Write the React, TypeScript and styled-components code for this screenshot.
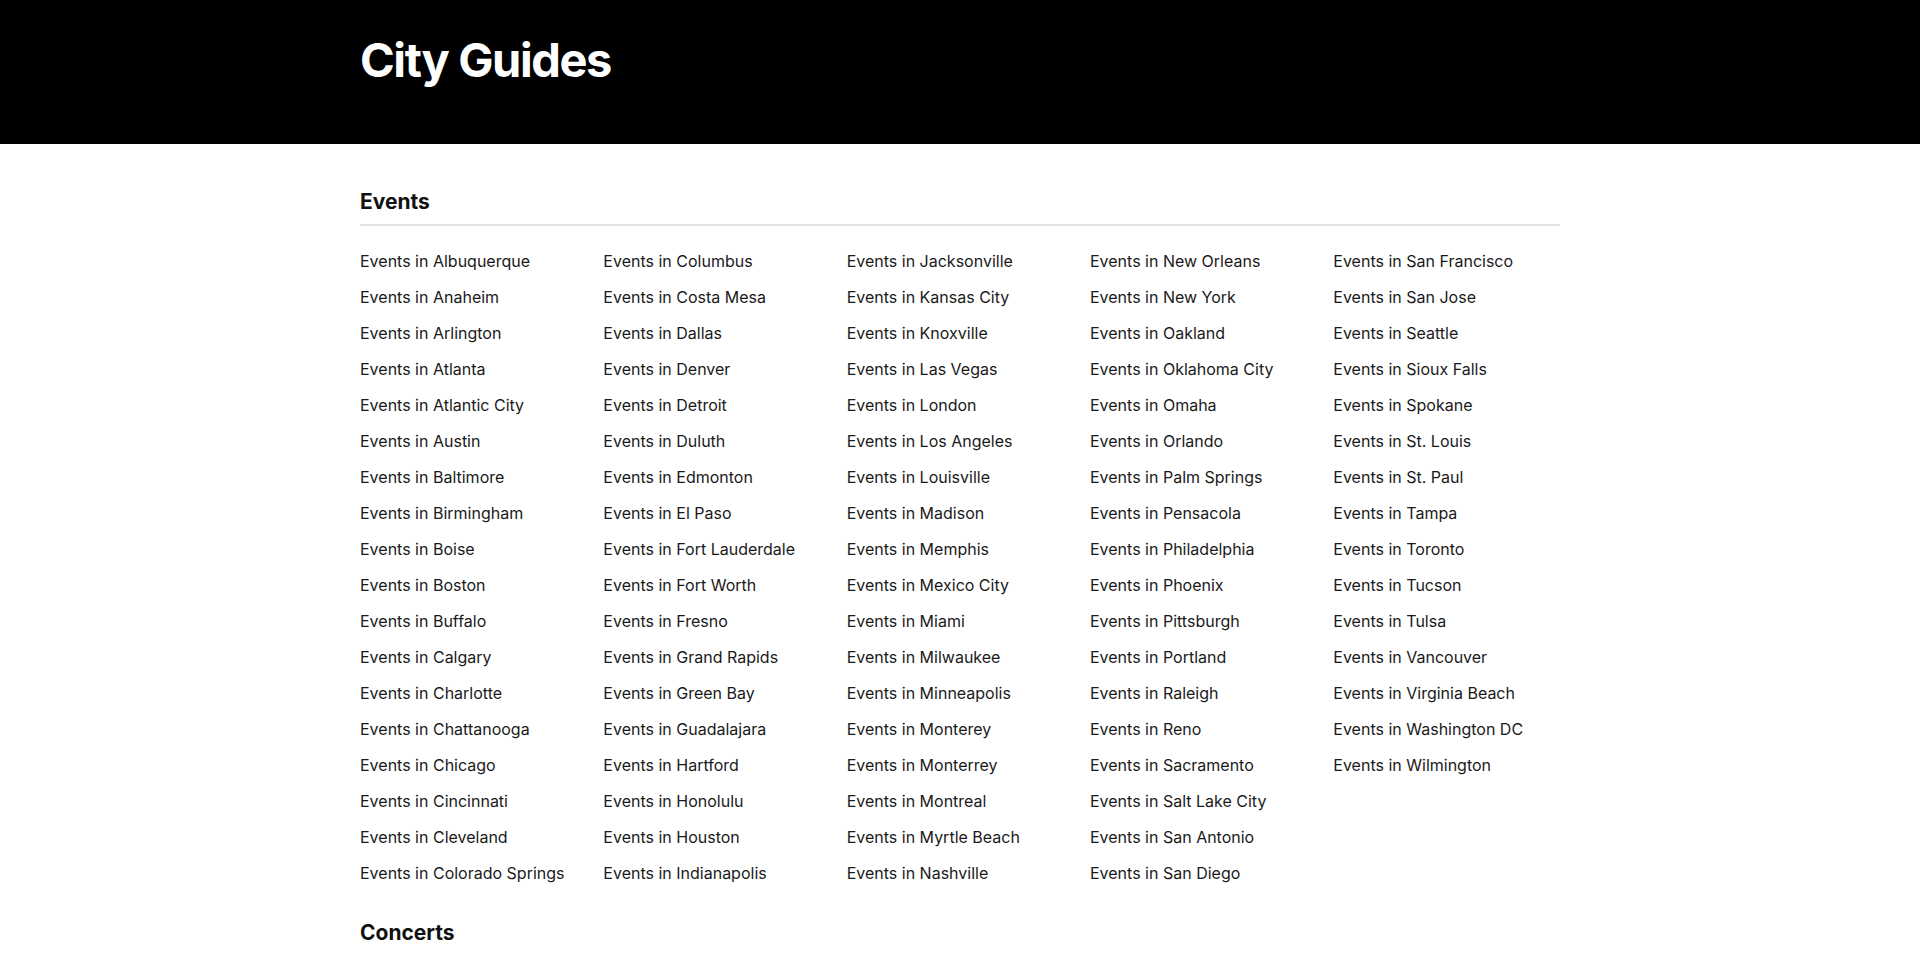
import React from "react"
import styled, { createGlobalStyle } from "styled-components"

const GlobalStyle = createGlobalStyle`
  body {
    margin: 0;
    background: #fff;
    font-family: Inter, "Liberation Sans", sans-serif;
    color: #1a1a1a;
  }
`

const Header = styled.header`
  background: #000;
  height: 144px;
  box-sizing: border-box;
  padding-top: 30px;
`

const Inner = styled.div`
  width: 1200px;
  margin: 0 auto;
`

const Title = styled.h1`
  margin: 0;
  color: #fff;
  font-size: 47px;
  font-weight: 700;
  letter-spacing: -1.4px;
  line-height: 60px;
`

const Main = styled.main`
  padding-top: 16px;
`

const Section = styled.section`
  padding-top: 28px;
`

const SectionTitle = styled.h2`
  margin: 0;
  font-size: 21px;
  font-weight: 700;
  color: #111;
  line-height: 28px;
  padding-bottom: 8px;
  border-bottom: 2px solid #e2e2e2;
`

const LinkGrid = styled.ul<{ $rows: number }>`
  list-style: none;
  margin: 0;
  padding: 17px 0 0;
  display: grid;
  grid-auto-flow: column;
  grid-template-rows: repeat(${(p) => p.$rows}, 36px);
  grid-template-columns: repeat(5, 243.33px);
`

const LinkItem = styled.li`
  font-size: 16px;
  line-height: 36px;
  white-space: nowrap;

  a {
    color: #1a1a1a;
    text-decoration: none;
  }
`

const eventCities = [
  "Albuquerque", "Anaheim", "Arlington", "Atlanta", "Atlantic City", "Austin",
  "Baltimore", "Birmingham", "Boise", "Boston", "Buffalo", "Calgary",
  "Charlotte", "Chattanooga", "Chicago", "Cincinnati", "Cleveland", "Colorado Springs",
  "Columbus", "Costa Mesa", "Dallas", "Denver", "Detroit", "Duluth",
  "Edmonton", "El Paso", "Fort Lauderdale", "Fort Worth", "Fresno", "Grand Rapids",
  "Green Bay", "Guadalajara", "Hartford", "Honolulu", "Houston", "Indianapolis",
  "Jacksonville", "Kansas City", "Knoxville", "Las Vegas", "London", "Los Angeles",
  "Louisville", "Madison", "Memphis", "Mexico City", "Miami", "Milwaukee",
  "Minneapolis", "Monterey", "Monterrey", "Montreal", "Myrtle Beach", "Nashville",
  "New Orleans", "New York", "Oakland", "Oklahoma City", "Omaha", "Orlando",
  "Palm Springs", "Pensacola", "Philadelphia", "Phoenix", "Pittsburgh", "Portland",
  "Raleigh", "Reno", "Sacramento", "Salt Lake City", "San Antonio", "San Diego",
  "San Francisco", "San Jose", "Seattle", "Sioux Falls", "Spokane", "St. Louis",
  "St. Paul", "Tampa", "Toronto", "Tucson", "Tulsa", "Vancouver",
  "Virginia Beach", "Washington DC", "Wilmington",
]

function CitySection({ title, cities = [], rows = 0 }: { title: string; cities?: string[]; rows?: number }) {
  return (
    <Section>
      <Inner>
        <SectionTitle>{title}</SectionTitle>
        {cities.length > 0 && (
          <LinkGrid $rows={rows}>
            {cities.map((city) => (
              <LinkItem key={city}>
                <a href="#">
                  {title} in {city}
                </a>
              </LinkItem>
            ))}
          </LinkGrid>
        )}
      </Inner>
    </Section>
  )
}

export default function App() {
  return (
    <>
      <GlobalStyle />
      <Header>
        <Inner>
          <Title>City Guides</Title>
        </Inner>
      </Header>
      <Main>
        <CitySection title="Events" cities={eventCities} rows={18} />
        <CitySection title="Concerts" />
      </Main>
    </>
  )
}
